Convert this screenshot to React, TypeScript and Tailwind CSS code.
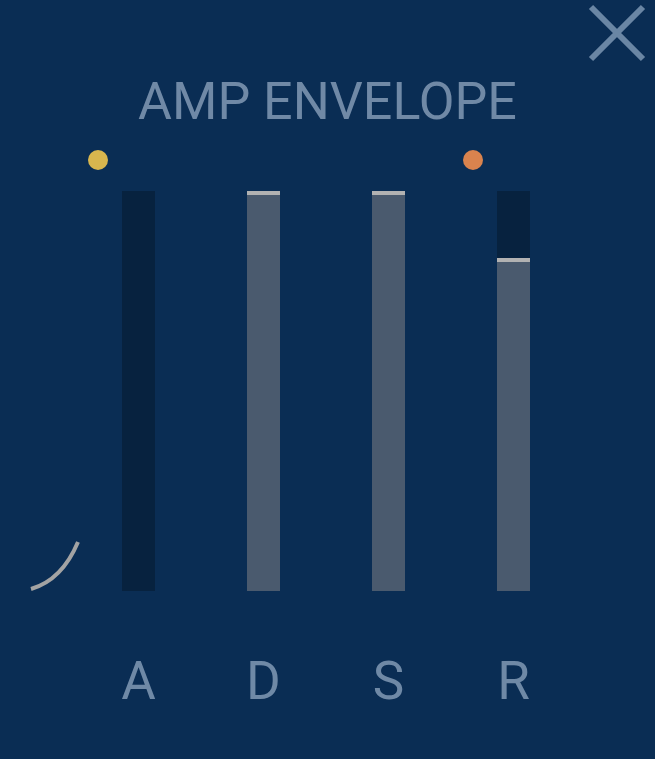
type Stage = {
    label: string;
    value: number;
    dot?: string;
};

const stages: Stage[] = [
    { label: 'A', value: 0, dot: 'bg-[#d8b64e]' },
    { label: 'D', value: 1 },
    { label: 'S', value: 1 },
    { label: 'R', value: 0.8325, dot: 'bg-[#d9834e]' },
];

function EnvelopeSlider({ stage }: { stage: Stage }) {
    return (
        <div className="relative flex w-[33px] flex-col items-center">
            {stage.dot && (
                <span className={`absolute -left-[34px] -top-[41px] h-5 w-5 rounded-full ${stage.dot}`} />
            )}
            <div className="flex h-[400px] w-[33px] flex-col justify-end bg-[#07223f]">
                {stage.value > 0 && (
                    <div
                        className="w-full border-t-4 border-[#b2b2b2] bg-[#4a5a6e]"
                        style={{ height: `${stage.value * 100}%` }}
                    />
                )}
            </div>
            <span className="mt-[64px] whitespace-nowrap text-[53px] leading-[53px] text-[#6f89a6]">
                {stage.label}
            </span>
        </div>
    );
}

export default function App() {
    return (
        <div className="relative h-screen w-full overflow-hidden bg-[#0a2d54] font-['Roboto',sans-serif]">
            <button className="absolute left-[586px] top-[2px]">
                <svg width="62" height="62" viewBox="0 0 62 62" fill="none">
                    <path d="M5 5 L57 57 M57 5 L5 57" stroke="#6a86a4" strokeWidth="6" />
                </svg>
            </button>

            <h1 className="pt-[76px] text-center text-[52px] leading-[52px] font-normal text-[#7089a6]">
                AMP ENVELOPE
            </h1>

            <div className="mt-[63px] flex items-start pl-[22px]">
                {/* release tail curve */}
                <div className="flex h-[400px] w-[100px] items-end">
                    <svg width="100" height="60" viewBox="0 0 100 60" fill="none">
                        <path d="M9 58 Q40 49 56 11" stroke="#a3a3a3" strokeWidth="4" />
                    </svg>
                </div>
                <div className="flex gap-[92px]">
                    {stages.map((s) => (
                        <EnvelopeSlider key={s.label} stage={s} />
                    ))}
                </div>
            </div>
        </div>
    );
}
